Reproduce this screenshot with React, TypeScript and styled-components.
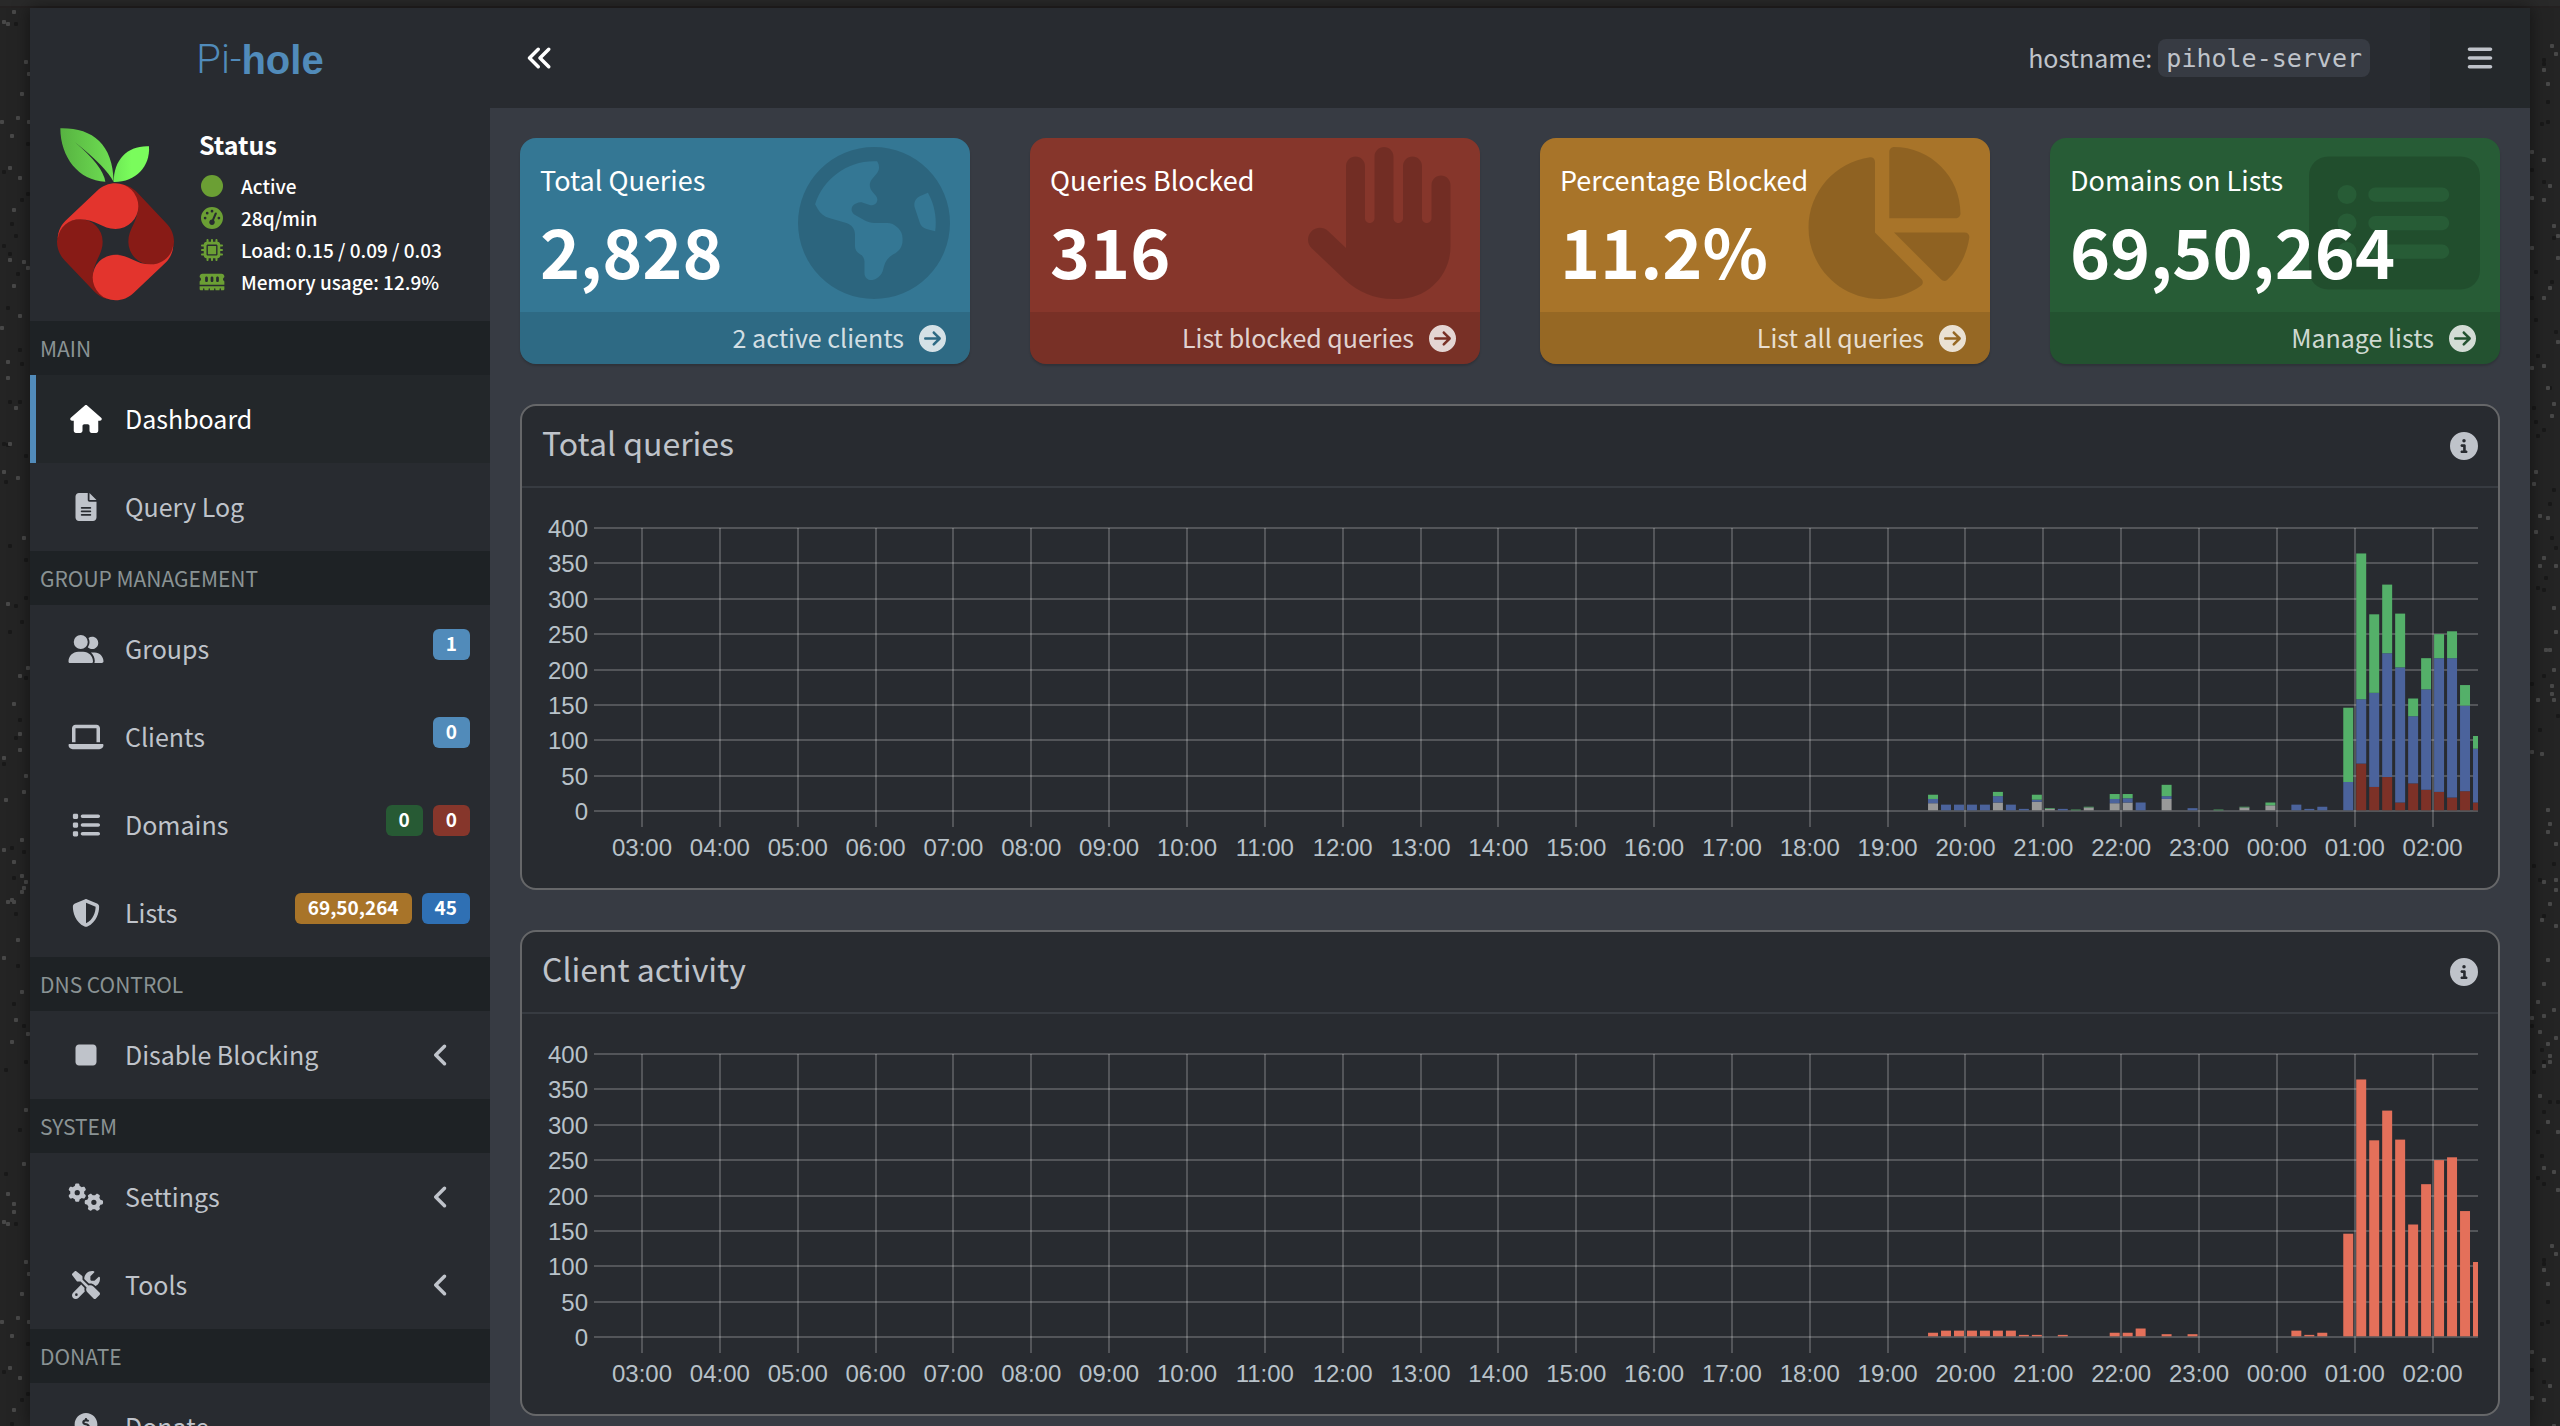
import React, { useLayoutEffect, useRef, useState } from "react";
import styled, { createGlobalStyle } from "styled-components";
import {
  FaAngleLeft,
  FaAnglesLeft,
  FaBars,
  FaChartPie,
  FaCircle,
  FaCircleArrowRight,
  FaCircleDollarToSlot,
  FaCircleInfo,
  FaEarthAmericas,
  FaFileLines,
  FaGaugeHigh,
  FaGears,
  FaHand,
  FaHouse,
  FaLaptop,
  FaList,
  FaMemory,
  FaMicrochip,
  FaRectangleList,
  FaScrewdriverWrench,
  FaShieldHalved,
  FaStop,
  FaUserGroup,
} from "react-icons/fa6";

const sans = `"Noto Sans CJK SC", "Noto Sans", sans-serif`;
const helvetica = `"Liberation Sans", Arial, sans-serif`;
const mono = `"DejaVu Sans Mono", monospace`;

const GlobalStyle = createGlobalStyle`
  *, *::before, *::after { box-sizing: border-box; }
  body {
    margin: 0;
    background: #242424;
    color: #bfc3ca;
    font-family: ${sans};
    font-size: 25px;
    line-height: 36px;
  }
  a { color: inherit; text-decoration: none; }
  button { font: inherit; color: inherit; background: none; border: 0; padding: 0; cursor: pointer; }
  h1, h2, h3, p, ul { margin: 0; padding: 0; font: inherit; list-style: none; }
  svg { display: block; flex: none; }
`;

/* ---------- page shell ---------- */

const Shell = styled.div`
  display: flex;
  flex-direction: column;
  height: 100vh;
  overflow: hidden;
`;

const TopStrip = styled.div`
  flex: none;
  height: 8px;
  background: #292929;
  border-bottom: 2px solid #242121;
`;

const Columns = styled.div`
  display: flex;
  flex: 1;
  min-height: 0;
`;

const Gutter = styled.div`
  flex: none;
  width: 30px;
  overflow: hidden;
`;

const Boxed = styled.div`
  position: relative;
  display: flex;
  flex: 1;
  min-width: 0;
  background: #373b43;
  box-shadow: 0 0 16px rgba(0, 0, 0, 0.5);
`;

/* ---------- sidebar ---------- */

const Sidebar = styled.aside`
  flex: none;
  width: 460px;
  background: #282b30;
`;

const Brand = styled.a`
  display: flex;
  align-items: center;
  justify-content: center;
  height: 100px;
  padding-top: 4px;
  font-family: ${helvetica};
  font-size: 40px;
  color: #518bba;
`;

const BrandLight = styled.span`
  font-family: Roboto, ${helvetica};
  font-weight: 300;
`;

const BrandBold = styled.b`
  font-weight: 700;
`;

const StatusPanel = styled.section`
  display: flex;
  gap: 25px;
  height: 213px;
  padding: 20px 20px 20px 27px;
`;

const StatusTitle = styled.h2`
  color: #fff;
  font-weight: 700;
  line-height: 32px;
  margin-bottom: 10px;
`;

const StatusRow = styled.li`
  display: flex;
  align-items: center;
  gap: 16px;
  height: 32px;
  color: #fff;
  font-size: 19px;
  font-weight: 500;
  white-space: nowrap;
`;

const StatusIcon = styled.span`
  width: 26px;
  color: #6b9f34;
  svg { width: 26px; height: 22px; }
`;

const NavHeading = styled.h3`
  padding: 9px 10px;
  background: #1e2225;
  color: #8a9394;
  font-size: 21px;
`;

const NavLink = styled.a<{ $active?: boolean }>`
  display: flex;
  align-items: center;
  height: 88px;
  padding: 0 20px 0 30px;
  border-left: 6px solid ${(p) => (p.$active ? "#518bba" : "transparent")};
  background: ${(p) => (p.$active ? "#23272a" : "transparent")};
  color: ${(p) => (p.$active ? "#fff" : "inherit")};
`;

const NavIcon = styled.span`
  margin-right: 19px;
  svg { width: 40px; height: 28px; }
`;

const NavLabel = styled.span`
  flex: 1;
  padding-bottom: 2px;
`;

const NavArrow = styled.span`
  padding-right: 20px;
  svg { width: 18px; height: 28px; }
`;

const Badges = styled.span`
  display: flex;
  gap: 10px;
  margin-bottom: 10px;
`;

const Badge = styled.span<{ $color: string }>`
  height: 31px;
  padding: 0 13px;
  border-radius: 6px;
  background: ${(p) => p.$color};
  color: #fff;
  font-size: 19px;
  font-weight: 700;
  line-height: 28px;
`;

/* ---------- main column ---------- */

const Main = styled.div`
  flex: 1;
  min-width: 0;
`;

const Navbar = styled.header`
  display: flex;
  align-items: center;
  height: 100px;
  background: #282b30;
`;

const Toggle = styled.button`
  display: flex;
  align-items: center;
  height: 100px;
  padding: 0 36px;
  color: #fff;
  svg { width: 28px; height: 28px; }
`;

const Hostname = styled.div`
  display: flex;
  align-items: center;
  gap: 6px;
  margin-left: auto;
  margin-right: 60px;
`;

const HostLabel = styled.span`
  padding-bottom: 2px;
`;

const HostCode = styled.code`
  padding: 2px 8px 0;
  border-radius: 8px;
  background: #373b43;
  font-family: ${mono};
`;

const MenuButton = styled.button`
  display: flex;
  align-items: center;
  justify-content: center;
  width: 100px;
  height: 100px;
  background: #24282b;
  svg { width: 28px; height: 28px; }
`;

const Content = styled.main`
  padding: 30px;
`;

const Cards = styled.section`
  display: grid;
  grid-template-columns: repeat(4, minmax(0, 1fr));
  gap: 60px;
  margin-bottom: 40px;
`;

const Card = styled.article<{ $color: string }>`
  overflow: hidden;
  border-radius: 16px;
  background: ${(p) => p.$color};
  box-shadow: 0 2px 2px rgba(0, 0, 0, 0.15);
`;

const CardBody = styled.div`
  position: relative;
  z-index: 0;
  padding: 22px 20px 24px;
  color: #fff;
`;

const CardTitle = styled.p`
  margin-bottom: 12px;
  font-size: 27px;
  line-height: 40px;
`;

const CardValue = styled.h3`
  font-size: 68px;
  font-weight: 700;
  line-height: 76px;
`;

const CardArt = styled.span<{ $wide?: boolean }>`
  position: absolute;
  z-index: -1;
  top: 9px;
  right: 20px;
  color: rgba(0, 0, 0, 0.15);
  svg { width: ${(p) => (p.$wide ? 171 : 152)}px; height: 152px; }
`;

const CardFooter = styled.a`
  display: flex;
  align-items: center;
  justify-content: flex-end;
  gap: 15px;
  height: 52px;
  padding: 0 24px;
  background: rgba(0, 0, 0, 0.1);
  color: rgba(255, 255, 255, 0.8);
  svg { width: 27px; height: 27px; }
`;

const CardLink = styled.span`
  padding-bottom: 2px;
`;

const Panel = styled.section`
  margin-bottom: 40px;
  border: 2px solid #666769;
  border-radius: 16px;
  background: #282b30;
`;

const PanelHeader = styled.header`
  display: flex;
  align-items: center;
  justify-content: space-between;
  height: 82px;
  padding: 0 20px;
  border-bottom: 2px solid #373b41;
  svg { width: 28px; height: 28px; }
`;

const PanelTitle = styled.h3`
  margin-bottom: 8px;
  font-size: 32px;
  line-height: 40px;
`;

const PanelBody = styled.div`
  padding: 20px;
`;

const ChartBox = styled.div`
  height: 360px;
  overflow: hidden;
`;

const AxisText = styled.text`
  fill: #b8c2c9;
  font-family: ${helvetica};
  font-size: 24px;
`;

/* ---------- speckled background beside the boxed layout ---------- */

type Pt = [number, number];

const leftLight: Pt[] = [[14,12],[4,22],[8,24],[26,62],[29,74],[22,94],[2,122],[18,118],[29,122],[12,136],[10,168],[20,178],[14,210],[10,260],[24,262],[28,268],[14,286],[20,316],[2,328],[8,362],[8,378],[16,408],[10,444],[4,472],[18,478],[24,538],[8,604],[28,668],[20,676],[14,704],[20,734],[20,750],[4,758],[26,776],[24,792],[6,800],[22,840],[4,850],[14,862],[22,876],[26,882],[24,888],[22,892],[12,900],[8,902],[14,902],[18,940],[4,958],[22,992],[16,1020],[28,1034],[12,1042],[26,1110],[24,1164],[8,1194],[14,1204]];
const leftDark: Pt[] = [[16,24],[28,144],[4,172],[28,194],[22,200],[12,224],[16,236],[4,246],[10,254],[18,274],[8,308],[20,350],[22,364],[10,402],[20,402],[4,444],[8,445],[26,456],[6,482],[10,546],[26,560],[26,598],[16,606],[22,622],[10,632],[26,678],[20,720],[16,738],[4,764],[12,848],[24,852],[14,878],[16,914],[18,966],[14,1004],[24,1026],[26,1062],[6,1070],[20,1130],[6,1174]];
const rightLight: Pt[] = [[22,46],[26,54],[14,70],[18,84],[2,152],[14,160],[20,186],[2,198],[14,200],[24,226],[28,236],[2,248],[28,258],[20,288],[14,298],[28,342],[2,368],[14,366],[18,388],[24,404],[22,416],[6,472],[4,484],[10,516],[18,518],[6,532],[14,558],[10,566],[26,566],[24,608],[26,632],[16,650],[20,650],[24,670],[22,686],[22,694],[8,700],[24,700],[2,752],[12,754],[18,810],[20,824],[18,832],[26,844],[14,882],[26,880],[26,890],[20,904],[12,920],[26,926],[18,960],[14,984],[8,1002],[24,1010],[14,1016],[2,1018],[10,1032],[26,1038],[18,1044],[20,1056],[20,1062],[14,1066],[10,1096],[18,1122],[28,1132],[14,1168],[24,1172],[28,1190]];
const rightDark: Pt[] = [[14,60],[14,64],[18,102],[12,124],[18,122],[2,170],[14,182],[24,238],[6,272],[22,282],[2,298],[6,320],[26,332],[8,356],[20,388],[4,408],[6,422],[14,430],[8,436],[24,490],[20,504],[22,538],[26,548],[16,578],[8,588],[14,590],[14,676],[2,684],[28,716],[10,730],[4,866],[24,864],[10,880],[14,916],[2,1026],[12,1050],[14,1062],[4,1072],[20,1102],[28,1102],[14,1112],[8,1132],[12,1156],[8,1178],[14,1184]];

const TILE = 1200;

function Speckles({ id, light, dark }: { id: string; light: Pt[]; dark: Pt[] }) {
  const dot = (fill: string) => ([x, y]: Pt, i: number) => (
    <rect key={fill + i} x={x - 2} y={y - 10} width={4} height={4} rx={1} fill={fill} />
  );
  return (
    <svg width="30" height="2400" aria-hidden="true">
      <defs>
        <pattern id={id} width="30" height={TILE} patternUnits="userSpaceOnUse">
          {dark.map(dot("#191919"))}
          {light.map(dot("#484848"))}
        </pattern>
      </defs>
      <rect width="30" height="2400" fill={`url(#${id})`} />
    </svg>
  );
}

/* ---------- logo ---------- */

const PETAL =
  "M-173 -10 C-173 -32 -163 -50 -150 -63 L-55 -153 C-40 -168 -20 -175.500 0 -175.500 A68.500 68.500 0 0 1 68.500 -107 A68.500 68.500 0 0 1 0 -38.500 C-40 -38.500 -60 -67.500 -106 -67.500 C-140 -67.500 -168 -45 -173 -10Z";

function Logo() {
  return (
    <svg width="117" height="173" viewBox="170 383 351 519" role="img" aria-label="Pi-hole logo">
      <defs>
        <linearGradient id="leafBig" x1="0" x2="1" y1="0" y2="0">
          <stop offset="0" stopColor="#57b241" />
          <stop offset="1" stopColor="#6fe053" />
        </linearGradient>
        <linearGradient id="leafSmall" x1="0" x2="1" y1="0" y2="0">
          <stop offset="0" stopColor="#6ee955" />
          <stop offset="0.500" stopColor="#7afc5c" />
        </linearGradient>
      </defs>
      <path
        fill="url(#leafBig)"
        d="M180 384 C275 382 338 430 340 545 Q318 500 222 424 Q308 496 315 544 C235 542 180 470 180 384Z"
      />
      <path fill="url(#leafSmall)" d="M446 438 C382 435 340 478 340 545 C405 546 450 500 446 438Z" />
      <g transform="translate(345.500 724.500)">
        <path d={PETAL} fill="#881b16" transform="rotate(90)" />
        <path d={PETAL} fill="#881b16" transform="rotate(-90)" />
        <path d={PETAL} fill="#e3342d" />
        <path d={PETAL} fill="#e3342d" transform="rotate(180)" />
      </g>
    </svg>
  );
}

/* ---------- charts ---------- */

const RED = "#7d3127";
const BLUE = "#4b639c";
const GREEN = "#54b069";
const GREY = "#999999";
const SALMON = "#e4705a";

// Each bar is [slot, cumulative heights by colour]; slot 0 is 19:35, ten minutes per slot.
type Bar = { slot: number; stack: [string, number][] };

const bar = (slot: number, ...stack: [string, number][]): Bar => ({ slot, stack });

const queryBars: Bar[] = [
  bar(0, [GREY, 11], [BLUE, 17], [GREEN, 23]),
  bar(1, [BLUE, 9]),
  bar(2, [BLUE, 9]),
  bar(3, [BLUE, 9]),
  bar(4, [BLUE, 9]),
  bar(5, [GREY, 12], [BLUE, 21], [GREEN, 27]),
  bar(6, [BLUE, 9]),
  bar(7, [BLUE, 3]),
  bar(8, [GREY, 13], [BLUE, 16], [GREEN, 23]),
  bar(9, [GREY, 3], [GREEN, 4]),
  bar(10, [BLUE, 3]),
  bar(11, [GREEN, 2]),
  bar(12, [GREY, 5], [GREEN, 6]),
  bar(14, [GREY, 11], [BLUE, 17], [GREEN, 24]),
  bar(15, [GREY, 12], [BLUE, 18], [GREEN, 24]),
  bar(16, [BLUE, 12]),
  bar(18, [GREY, 17], [BLUE, 21], [GREEN, 37]),
  bar(20, [BLUE, 4]),
  bar(22, [GREEN, 2]),
  bar(24, [GREY, 5], [GREEN, 6]),
  bar(26, [GREY, 8], [GREEN, 12]),
  bar(28, [BLUE, 9]),
  bar(29, [BLUE, 3]),
  bar(30, [BLUE, 6]),
  bar(32, [BLUE, 41], [GREEN, 146]),
  bar(33, [RED, 67], [BLUE, 158], [GREEN, 364]),
  bar(34, [RED, 34], [BLUE, 167], [GREEN, 278]),
  bar(35, [RED, 48], [BLUE, 223], [GREEN, 320]),
  bar(36, [RED, 12], [BLUE, 203], [GREEN, 279]),
  bar(37, [RED, 39], [BLUE, 134], [GREEN, 159]),
  bar(38, [RED, 30], [BLUE, 172], [GREEN, 216]),
  bar(39, [RED, 27], [BLUE, 216], [GREEN, 250]),
  bar(40, [RED, 19], [BLUE, 216], [GREEN, 254]),
  bar(41, [RED, 28], [BLUE, 149], [GREEN, 178]),
  bar(42, [RED, 12], [BLUE, 88], [GREEN, 106]),
];

const clientBars: Bar[] = (
  [
    [0, 6], [1, 9], [2, 9], [3, 9], [4, 9], [5, 9], [6, 9], [7, 3], [8, 3], [10, 3],
    [14, 6], [15, 6], [16, 12], [18, 4], [20, 4], [28, 9], [29, 3], [30, 6],
    [32, 146], [33, 364], [34, 278], [35, 320], [36, 279], [37, 159], [38, 216],
    [39, 250], [40, 254], [41, 178], [42, 106],
  ] as Pt[]
).map(([slot, v]) => bar(slot, [SALMON, v]));

const PLOT_LEFT = 52;
const PLOT_TOP = 20;
const PLOT_BOTTOM = 303;
const START_MIN = 143;
const SPAN_MIN = 1452;
const FIRST_SLOT_MIN = 19 * 60 + 35;

function TimeChart({ bars, label }: { bars: Bar[]; label: string }) {
  const box = useRef<HTMLDivElement>(null);
  const [width, setWidth] = useState(1936);

  useLayoutEffect(() => {
    const el = box.current;
    if (!el) return;
    const measure = () => setWidth(el.clientWidth);
    measure();
    const observer = new ResizeObserver(measure);
    observer.observe(el);
    return () => observer.disconnect();
  }, []);

  const x = (min: number) => PLOT_LEFT + ((min - START_MIN) / SPAN_MIN) * (width - PLOT_LEFT);
  const y = (v: number) => PLOT_BOTTOM - (v / 400) * (PLOT_BOTTOM - PLOT_TOP);
  const values = Array.from({ length: 9 }, (_, i) => i * 50);
  const hours = Array.from({ length: 24 }, (_, i) => i + 3);
  const barWidth = x(START_MIN + 10) - PLOT_LEFT - 3;

  return (
    <ChartBox ref={box}>
      <svg width={width} height={360} role="img" aria-label={label}>
        <g stroke="#fff" strokeOpacity={0.2} strokeWidth={2}>
          {values.map((v) => (
            <line key={v} x1={PLOT_LEFT} x2={width} y1={Math.round(y(v))} y2={Math.round(y(v))} />
          ))}
          {hours.map((h) => (
            <line key={h} x1={Math.round(x(h * 60))} x2={Math.round(x(h * 60))} y1={PLOT_TOP} y2={PLOT_BOTTOM + 16} />
          ))}
        </g>
        {bars.map(({ slot, stack }) => {
          const left = x(FIRST_SLOT_MIN + slot * 10) - barWidth / 2;
          return stack.map(([color, top], i) => {
            const base = i ? stack[i - 1][1] : 1;
            return <rect key={`${slot}-${i}`} x={left} y={y(top)} width={barWidth} height={y(base) - y(top)} fill={color} />;
          });
        })}
        {values.map((v) => (
          <AxisText key={v} x={PLOT_LEFT - 6} y={Math.round(y(v)) + 9} textAnchor="end">
            {v}
          </AxisText>
        ))}
        {hours.map((h) => (
          <AxisText key={h} x={x(h * 60)} y={348} textAnchor="middle">
            {`${String(h % 24).padStart(2, "0")}:00`}
          </AxisText>
        ))}
      </svg>
    </ChartBox>
  );
}

/* ---------- content data ---------- */

type NavItem = {
  label: string;
  icon: React.ReactNode;
  active?: boolean;
  expandable?: boolean;
  badges?: [string, string][];
};

const sections: { title: string; items: NavItem[] }[] = [
  {
    title: "MAIN",
    items: [
      { label: "Dashboard", icon: <FaHouse />, active: true },
      { label: "Query Log", icon: <FaFileLines /> },
    ],
  },
  {
    title: "GROUP MANAGEMENT",
    items: [
      { label: "Groups", icon: <FaUserGroup />, badges: [["1", "#518bba"]] },
      { label: "Clients", icon: <FaLaptop />, badges: [["0", "#518bba"]] },
      { label: "Domains", icon: <FaList />, badges: [["0", "#275a34"], ["0", "#86362b"]] },
      { label: "Lists", icon: <FaShieldHalved />, badges: [["69,50,264", "#a87429"], ["45", "#2f70b4"]] },
    ],
  },
  { title: "DNS CONTROL", items: [{ label: "Disable Blocking", icon: <FaStop />, expandable: true }] },
  {
    title: "SYSTEM",
    items: [
      { label: "Settings", icon: <FaGears />, expandable: true },
      { label: "Tools", icon: <FaScrewdriverWrench />, expandable: true },
    ],
  },
  { title: "DONATE", items: [{ label: "Donate", icon: <FaCircleDollarToSlot /> }] },
];

const statusRows: [React.ReactNode, string][] = [
  [<FaCircle />, "Active"],
  [<FaGaugeHigh />, "28q/min"],
  [<FaMicrochip />, "Load: 0.15 / 0.09 / 0.03"],
  [<FaMemory />, "Memory usage: 12.9%"],
];

const cards = [
  { title: "Total Queries", value: "2,828", link: "2 active clients", color: "#347794", art: <FaEarthAmericas /> },
  { title: "Queries Blocked", value: "316", link: "List blocked queries", color: "#86362b", art: <FaHand /> },
  { title: "Percentage Blocked", value: "11.2%", link: "List all queries", color: "#a87429", art: <FaChartPie />, wide: true },
  { title: "Domains on Lists", value: "69,50,264", link: "Manage lists", color: "#275c36", art: <FaRectangleList />, wide: true },
];

const panels = [
  { title: "Total queries", bars: queryBars },
  { title: "Client activity", bars: clientBars },
];

export default function App() {
  return (
    <>
      <GlobalStyle />
      <Shell>
        <TopStrip />
        <Columns>
          <Gutter>
            <Speckles id="specklesLeft" light={leftLight} dark={leftDark} />
          </Gutter>
          <Boxed>
            <Sidebar>
              <Brand href="#">
                <BrandLight>Pi-</BrandLight>
                <BrandBold>hole</BrandBold>
              </Brand>
              <StatusPanel>
                <Logo />
                <div>
                  <StatusTitle>Status</StatusTitle>
                  <ul>
                    {statusRows.map(([icon, text]) => (
                      <StatusRow key={text}>
                        <StatusIcon>{icon}</StatusIcon>
                        {text}
                      </StatusRow>
                    ))}
                  </ul>
                </div>
              </StatusPanel>
              <nav>
                {sections.map((section) => (
                  <section key={section.title}>
                    <NavHeading>{section.title}</NavHeading>
                    {section.items.map((item) => (
                      <NavLink key={item.label} href="#" $active={item.active}>
                        <NavIcon>{item.icon}</NavIcon>
                        <NavLabel>{item.label}</NavLabel>
                        {item.badges && (
                          <Badges>
                            {item.badges.map(([text, color]) => (
                              <Badge key={color} $color={color}>
                                {text}
                              </Badge>
                            ))}
                          </Badges>
                        )}
                        {item.expandable && (
                          <NavArrow>
                            <FaAngleLeft />
                          </NavArrow>
                        )}
                      </NavLink>
                    ))}
                  </section>
                ))}
              </nav>
            </Sidebar>
            <Main>
              <Navbar>
                <Toggle aria-label="Toggle navigation">
                  <FaAnglesLeft />
                </Toggle>
                <Hostname>
                  <HostLabel>hostname:</HostLabel>
                  <HostCode>pihole-server</HostCode>
                </Hostname>
                <MenuButton aria-label="Menu">
                  <FaBars />
                </MenuButton>
              </Navbar>
              <Content>
                <Cards>
                  {cards.map((card) => (
                    <Card key={card.title} $color={card.color}>
                      <CardBody>
                        <CardArt $wide={card.wide}>{card.art}</CardArt>
                        <CardTitle>{card.title}</CardTitle>
                        <CardValue>{card.value}</CardValue>
                      </CardBody>
                      <CardFooter href="#">
                        <CardLink>{card.link}</CardLink>
                        <FaCircleArrowRight />
                      </CardFooter>
                    </Card>
                  ))}
                </Cards>
                {panels.map((panel) => (
                  <Panel key={panel.title}>
                    <PanelHeader>
                      <PanelTitle>{panel.title}</PanelTitle>
                      <FaCircleInfo />
                    </PanelHeader>
                    <PanelBody>
                      <TimeChart bars={panel.bars} label={panel.title} />
                    </PanelBody>
                  </Panel>
                ))}
              </Content>
            </Main>
          </Boxed>
          <Gutter>
            <Speckles id="specklesRight" light={rightLight} dark={rightDark} />
          </Gutter>
        </Columns>
      </Shell>
    </>
  );
}
